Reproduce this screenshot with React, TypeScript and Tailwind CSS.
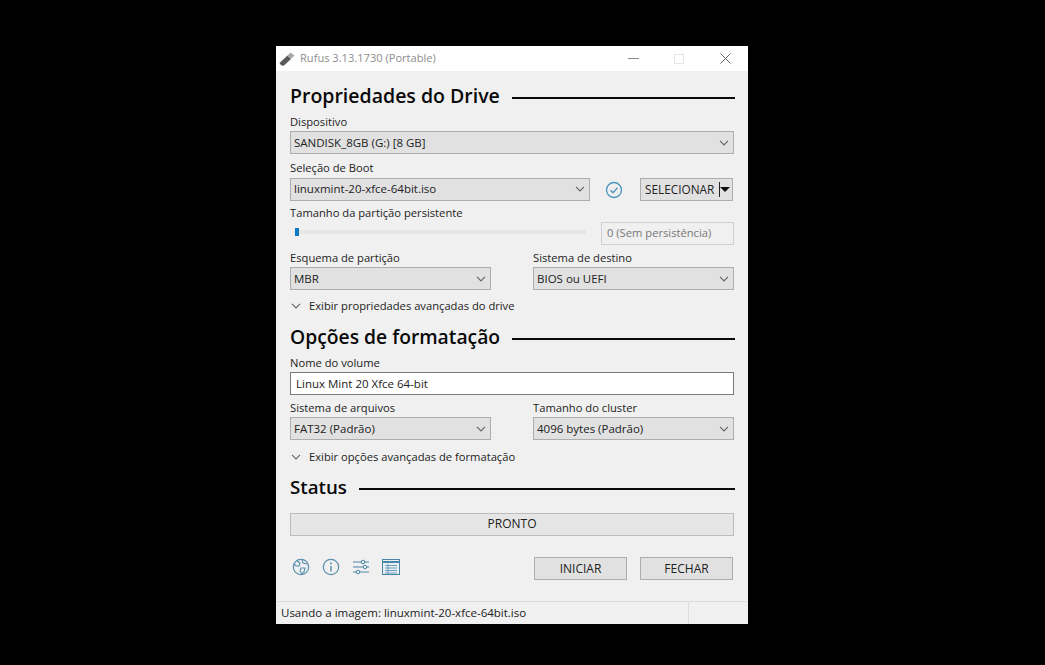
const font = { fontFamily: '"Open Sans","Noto Sans",sans-serif' };

function Chevron({ className = "" }: { className?: string }) {
  return (
    <svg width="10" height="6" viewBox="0 0 10 6" className={className}>
      <path d="M1 0.8 L5 4.8 L9 0.8" fill="none" stroke="#666" strokeWidth="1.2" />
    </svg>
  );
}

function Select({ value, className = "" }: { value: string; className?: string }) {
  return (
    <div className={`h-[23px] flex items-center justify-between pl-[3px] pr-[3px] bg-[#e1e1e1] border border-[#adadad] text-[11.5px] text-[#222] ${className}`}>
      <span>{value}</span>
      <Chevron className="mr-[1px]" />
    </div>
  );
}

function Heading({ children, className = "", size = "text-[19.3px]" }: { children: string; className?: string; size?: string }) {
  return (
    <div className={`flex items-center gap-[12px] h-[24px] mr-[-1px] ${className}`}>
      <span className={`${size} leading-[24px] font-semibold text-[#0a0a0a] whitespace-nowrap`}>{children}</span>
      <div className="flex-1 h-[2px] mt-[3px] bg-[#0a0a0a]" />
    </div>
  );
}

function Label({ children, className = "" }: { children: string; className?: string }) {
  return <div className={`text-[11.2px] leading-[16px] text-[#222] ${className}`}>{children}</div>;
}

function Btn({ children, className = "" }: { children: string; className?: string }) {
  return (
    <div className={`h-[23px] w-[93px] flex items-center justify-center bg-[#e1e1e1] border border-[#adadad] text-[12px] text-[#222] ${className}`}>
      {children}
    </div>
  );
}

function Expand({ children, className = "" }: { children: string; className?: string }) {
  return (
    <div className={`flex items-center h-[16px] text-[11.2px] leading-[16px] text-[#222] ${className}`}>
      <Chevron className="ml-[1px] mr-[8px]" />
      <span>{children}</span>
    </div>
  );
}

export default function App() {
  return (
    <div className="w-[1045px] h-[665px] bg-black flex items-start justify-start pl-[276px] pt-[46px]" style={font}>
      <div className="w-[472px] h-[578px] bg-[#f0f0f0] flex flex-col">
        {/* title bar */}
        <div className="h-[25px] bg-white flex items-center shrink-0">
          <svg width="16" height="16" viewBox="0 0 16 16" className="ml-[3px] mr-[5px]">
            <path d="M0.5 12 L8.5 4.5 L12 8 L5 14.5 Q2 15.5 0.5 12Z" fill="#5a5a5a" />
            <path d="M8.5 4.5 L11.5 1.5 L15.5 4.5 L12 8Z" fill="#a8a8a8" />
          </svg>
          <span className="text-[11.1px] text-[#8e8e8e]">Rufus 3.13.1730 (Portable)</span>
          <div className="ml-auto flex items-center">
            <div className="w-[46px] flex justify-center">
              <div className="w-[11px] h-[1px] bg-[#888]" />
            </div>
            <div className="w-[46px] flex justify-center">
              <div className="w-[10px] h-[10px] border border-[#e6e6e6]" />
            </div>
            <div className="w-[46px] flex justify-center">
              <svg width="11" height="11" viewBox="0 0 11 11">
                <path d="M0.5 0.5 L10.5 10.5 M10.5 0.5 L0.5 10.5" stroke="#666" strokeWidth="1" />
              </svg>
            </div>
          </div>
        </div>

        {/* content */}
        <div className="flex-1 flex flex-col pl-[14px] pr-[14px]">
          <Heading className="mt-[13px]" size="text-[19.5px]">Propriedades do Drive</Heading>
          <Label className="mt-[6px]">Dispositivo</Label>
          <Select className="mt-[1px]" value="SANDISK_8GB (G:) [8 GB]" />
          <Label className="mt-[6px]">Seleção de Boot</Label>
          <div className="flex items-center mt-[1px]">
            <Select className="w-[300px]" value="linuxmint-20-xfce-64bit.iso" />
            <svg width="18" height="18" viewBox="0 0 18 18" className="ml-[15px] mr-[17px] mt-[1px]">
              <circle cx="9" cy="9" r="7.5" fill="none" stroke="#4a94bb" strokeWidth="1.3" />
              <path d="M5.5 9.2 L8 11.7 L12.5 6.8" fill="none" stroke="#4a94bb" strokeWidth="1.3" />
            </svg>
            <div className="relative h-[23px] w-[93px] mt-[1px] flex items-center bg-[#e1e1e1] border border-[#adadad] text-[11.8px] text-[#222] pl-[4px]">
              <span>SELECIONAR</span>
              <div className="absolute left-[78px] top-[3px] bottom-[3px] w-[1px] bg-[#222]" />
              <div className="absolute right-[2px] top-[8px] w-0 h-0 border-l-[5px] border-r-[5px] border-t-[5px] border-l-transparent border-r-transparent border-t-[#111]" />
            </div>
          </div>
          <Label className="mt-[4px]">Tamanho da partição persistente</Label>
          <div className="flex items-center h-[23px] mt-[1px]">
            <div className="relative w-[292px] h-[4px] bg-[#e6e6e6] ml-[4px] mt-[-4px]">
              <div className="absolute left-[1px] top-[-2px] w-[4px] h-[8px] bg-[#0f78c4]" />
            </div>
            <div className="ml-auto w-[133px] h-[23px] flex items-center pl-[5px] border border-[#d0d0d0] bg-[#f0f0f0] text-[11.2px] text-[#777]">
              0 (Sem persistência)
            </div>
          </div>
          <div className="grid grid-cols-[201px_201px] gap-x-[42px] mt-[5px]">
            <Label>Esquema de partição</Label>
            <Label>Sistema de destino</Label>
            <Select className="mt-[1px]" value="MBR" />
            <Select className="mt-[1px]" value="BIOS ou UEFI" />
          </div>
          <Expand className="mt-[8px]">Exibir propriedades avançadas do drive</Expand>
          <Heading className="mt-[11px]" size="text-[19.3px]">Opções de formatação</Heading>
          <Label className="mt-[6px]">Nome do volume</Label>
          <div className="h-[23px] mt-[1px] flex items-center pl-[5px] bg-white border border-[#7a7a7a] text-[11.5px] text-[#222]">
            Linux Mint 20 Xfce 64-bit
          </div>
          <div className="grid grid-cols-[201px_201px] gap-x-[42px] mt-[5px]">
            <Label>Sistema de arquivos</Label>
            <Label>Tamanho do cluster</Label>
            <Select className="mt-[1px]" value="FAT32 (Padrão)" />
            <Select className="mt-[1px]" value="4096 bytes (Padrão)" />
          </div>
          <Expand className="mt-[9px]">Exibir opções avançadas de formatação</Expand>
          <Heading className="mt-[10px]" size="text-[18.7px]">Status</Heading>
          <div className="h-[23px] mt-[14px] flex items-center justify-center bg-[#e6e6e6] border border-[#bcbcbc] text-[12px] leading-[15px] pb-[2px] text-[#222]">
            PRONTO
          </div>
          <div className="flex items-center mt-[21px] h-[23px]">
            <div className="flex items-center gap-[12px] mt-[-3px] ml-[2px]">
              <svg width="18" height="18" viewBox="0 0 18 18">
                <circle cx="9" cy="9" r="7.7" fill="none" stroke="#5b8fae" strokeWidth="1.2" />
                <path d="M5 3 L8 5 L7 8 L4 8 L2 6 M10 2 L11 5 L15 6 M9 10 L13 10 L12 14 L10 16 L8 13Z" fill="none" stroke="#5b8fae" strokeWidth="1.1" />
              </svg>
              <svg width="18" height="18" viewBox="0 0 18 18">
                <circle cx="9" cy="9" r="7.7" fill="none" stroke="#5b8fae" strokeWidth="1.2" />
                <path d="M9 8 V13.5" stroke="#5b8fae" strokeWidth="1.5" />
                <circle cx="9" cy="5.5" r="1" fill="#5b8fae" />
              </svg>
              <svg width="18" height="18" viewBox="0 0 18 18">
                <path d="M1 4 H17 M1 9 H17 M1 14 H17" stroke="#4a86a8" strokeWidth="1.1" />
                <circle cx="11" cy="4" r="1.8" fill="#f0f0f0" stroke="#4a86a8" />
                <circle cx="13" cy="9" r="1.8" fill="#f0f0f0" stroke="#4a86a8" />
                <circle cx="6" cy="14" r="1.8" fill="#f0f0f0" stroke="#4a86a8" />
              </svg>
              <svg width="18" height="16" viewBox="0 0 18 16">
                <rect x="0.5" y="0.5" width="17" height="15" fill="#e8f0f5" stroke="#4a86a8" />
                <path d="M1 3 H17" stroke="#4a86a8" strokeWidth="2" />
                <path d="M3 6.5 H15 M3 9 H15 M3 11.5 H15 M3 14 H15 M6 5 V15" stroke="#6d9dba" strokeWidth="1" />
              </svg>
            </div>
            <div className="ml-auto flex gap-[13px] mr-[1px]">
              <Btn>INICIAR</Btn>
              <Btn>FECHAR</Btn>
            </div>
          </div>
        </div>

        {/* status bar */}
        <div className="h-[23px] shrink-0 flex border-t border-[#dcdcdc] text-[11.5px] text-[#222]">
          <div className="w-[413px] flex items-center pl-[5px] border-r border-[#dcdcdc]">
            Usando a imagem: linuxmint-20-xfce-64bit.iso
          </div>
        </div>
      </div>
    </div>
  );
}
